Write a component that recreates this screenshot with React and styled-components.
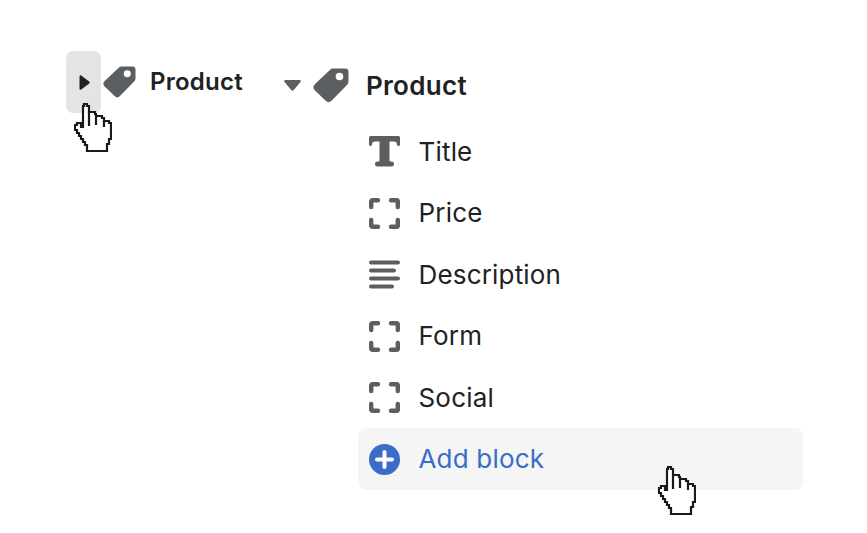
import React from "react";
import styled, { createGlobalStyle } from "styled-components";

const Global = createGlobalStyle`
  html, body { margin: 0; padding: 0; background: #fff; }
  body { font-family: Inter, "Liberation Sans", sans-serif; color: #202223; -webkit-font-smoothing: antialiased; }
`;

const Page = styled.div`
  width: 867px; height: 533px; box-sizing: border-box; overflow: hidden;
  display: flex; align-items: flex-start; padding: 51px 0 0 66px;
`;
const Collapsed = styled.div`
  display: flex; align-items: center; height: 62px; width: 218px; flex: none;
`;
const ToggleButton = styled.div`
  position: relative; flex: none; width: 35px; height: 62px; border-radius: 7px; background: #e3e4e6;
  display: flex; align-items: center; justify-content: center; padding-left: 2px; box-sizing: border-box;
`;
const TagSlot = styled.span`
  display: flex; flex: none; margin-left: ${p => p.$ml}px; color: #5c5f62;
`;
const ParentLabel = styled.span`
  font-weight: 600; font-size: ${p => p.$size}px; line-height: 1; letter-spacing: ${p => p.$ls || 0}px;
  margin-left: ${p => p.$ml}px; color: #202223;
`;
const Tree = styled.div`
  display: flex; flex-direction: column; width: 519px; flex: none;
`;
const TreeHeader = styled.div`
  display: flex; align-items: center; height: 69.5px;
`;
const Rows = styled.div`
  display: flex; flex-direction: column; margin-left: 74px;
`;
const Row = styled.div`
  position: relative; display: flex; align-items: center; height: 61.5px; width: 445px;
  padding: 1px 0 0 11px; box-sizing: border-box; gap: 18.5px; border-radius: 8px;
  background: ${p => (p.$hover ? "#f5f5f6" : "transparent")};
  color: ${p => (p.$hover ? "#3a6cc8" : "#202223")};
  font-size: 26px; line-height: 1; letter-spacing: 0.18px;
`;
const IconSlot = styled.span`
  display: flex; width: 31px; height: 31px; flex: none; color: #5c5f62;
`;
const CursorWrap = styled.span`
  position: absolute; display: flex; left: ${p => p.$x}px; top: ${p => p.$y}px; pointer-events: none;
`;

const Tag = ({ size }) => (
  <svg width={size} height={size} viewBox="0 0 34 34" fill="currentColor">
    <path fillRule="evenodd" d="M19 .5h11.500a3 3 0 0 1 3 3V13a4 4 0 0 1-1.200 2.800L17.500 31a4 4 0 0 1-5.600 0L1.700 21a4 4 0 0 1 0-5.600L16.200 1.700A4 4 0 0 1 19 .5ZM25 4.400a3.600 3.600 0 1 0 0 7.200 3.600 3.600 0 0 0 0-7.200Z" />
  </svg>
);
const CaretRight = () => (
  <svg width="11" height="15" viewBox="0 0 11 15" fill="#202223"><path d="M.5 1.200C.5.300 1.500-.2 2.200.4l8 6.200c.6.500.6 1.300 0 1.800l-8 6.200c-.7.600-1.700.1-1.700-.8Z" /></svg>
);
const CaretDown = () => (
  <svg width="17" height="11" viewBox="0 0 17 11" fill="#5c5f62"><path d="M1.500 0h14c1.100 0 1.700 1.200 1 2l-7 8.300c-.5.600-1.500.6-2 0l-7-8.300c-.7-.8-.1-2 1-2Z" /></svg>
);
const TitleIcon = () => (
  <svg viewBox="0 0 31 31" width="31" height="31" fill="currentColor">
    <path d="M1.500 0h28A1.500 1.500 0 0 1 31 1.500V8.500a1.500 1.500 0 0 1-3 0C28 6.500 26.500 5.500 25 5.500H20.500V24c0 1 .5 1.500 1.500 1.500h.5a2.500 2.500 0 0 1 0 5H8.500a2.500 2.500 0 0 1 0-5H9c1 0 1.500-.5 1.500-1.500V5.500H6C4.500 5.500 3 6.500 3 8.500a1.500 1.500 0 0 1-3 0V1.500A1.500 1.500 0 0 1 1.500 0Z" />
  </svg>
);
const FrameIcon = () => (
  <svg viewBox="0 0 31 31" width="31" height="31" fill="none" stroke="currentColor" strokeWidth="4.400" strokeLinecap="round" strokeLinejoin="round">
    <path d="M2.200 9V3.500a1.300 1.300 0 0 1 1.300-1.300H9M22 2.200h5.500a1.300 1.300 0 0 1 1.300 1.300V9M28.800 22v5.500a1.300 1.300 0 0 1-1.300 1.300H22M9 28.800H3.500a1.300 1.300 0 0 1-1.300-1.300V22" />
  </svg>
);
const LinesIcon = () => (
  <svg viewBox="0 0 31 31" width="31" height="31" fill="none" stroke="currentColor" strokeWidth="4" strokeLinecap="round">
    <path d="M2 3.500h27M2 11.500h23M2 19.500h27M2 27.500h21" />
  </svg>
);
const PlusIcon = () => (
  <svg viewBox="0 0 31 31" width="31" height="31">
    <circle cx="15.500" cy="15.500" r="15.500" fill="#3a6cc8" />
    <path d="M15.500 8v15M8 15.500h15" stroke="#fff" strokeWidth="4" strokeLinecap="round" />
  </svg>
);
const Hand = () => (
  <svg width="38" height="50" viewBox="0 0 38 50">
    <path fill="#fff" stroke="#1a1a1a" strokeWidth="2.200" d="M10 1H13V3H15V9H21V11H22V13H28V15H30V18H35V20H37V36H35V41H33V48H13V42H11V39H9V36H7V33H5V30H3V27H1V22H3V20H7V24H9V3H10Z" />
    <path fill="none" stroke="#1a1a1a" strokeWidth="2.200" d="M15 9V23M22 13V22M30 18V24" />
  </svg>
);

const iconFor = {
  Price: FrameIcon, Form: FrameIcon, Social: FrameIcon, Title: TitleIcon, Description: LinesIcon,
};
const items = ["Title", "Price", "Description", "Form", "Social"];

export default function App() {
  return (
    <Page>
      <Global />
      <Collapsed>
        <ToggleButton>
          <CaretRight />
          <CursorWrap $x={8} $y={52}><Hand /></CursorWrap>
        </ToggleButton>
        <TagSlot $ml={2}><Tag size={33} /></TagSlot>
        <ParentLabel $size={24} $ls={0.25} $ml={14}>Product</ParentLabel>
      </Collapsed>
      <Tree>
        <TreeHeader>
          <CaretDown />
          <TagSlot $ml={12}><Tag size={36} /></TagSlot>
          <ParentLabel $size={26} $ls={0.3} $ml={17}>Product</ParentLabel>
        </TreeHeader>
        <Rows>
          {items.map(name => {
            const Icon = iconFor[name];
            return (
              <Row key={name}>
                <IconSlot><Icon /></IconSlot>
                {name}
              </Row>
            );
          })}
          <Row $hover>
            <IconSlot><PlusIcon /></IconSlot>
            Add block
            <CursorWrap $x={300} $y={38}><Hand /></CursorWrap>
          </Row>
        </Rows>
      </Tree>
    </Page>
  );
}
